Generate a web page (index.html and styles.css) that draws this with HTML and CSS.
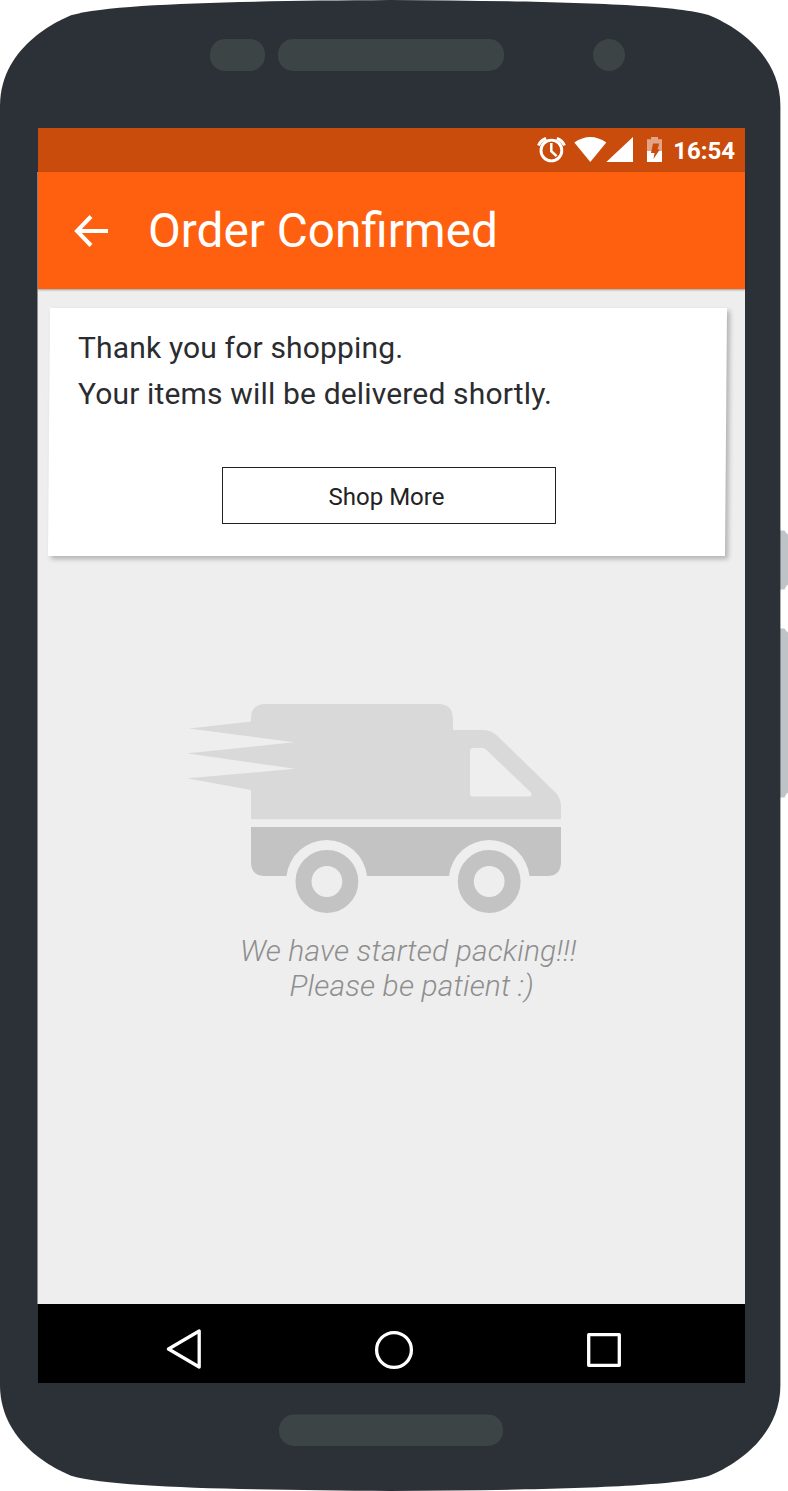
FILE: index.html
```html
<!DOCTYPE html>
<html lang="en">
<head>
<meta charset="utf-8">
<title>Order Confirmed</title>
<link rel="stylesheet" href="styles.css">
</head>
<body>
<div class="device">
  <svg class="shell" viewBox="0 0 788 1491" aria-hidden="true">
    <path class="key" d="M780 530.500h4.500q1.500 3 3.500 4v50q-2 1-3.500 5H780zM780 628.500h4.500q1.500 3 3.500 4v160q-2 1-3.500 5H780z"/>
    <path class="frame" d="M390 0C250 1 112 3 72 15C64 18 0 44 0 106V1385C0 1447 64 1473 72 1476C112 1488 250 1490 390 1491C530 1490 668 1488 708.500 1476C716 1473 780.400 1447 780.400 1385V106C780.400 44 716 18 708.500 15C668 3 530 1 390 0Z"/>
    <rect class="slot" x="210" y="39" width="55" height="32" rx="15"/>
    <rect class="slot" x="278" y="39" width="226" height="32" rx="15"/>
    <circle class="slot" cx="609" cy="55" r="16"/>
    <rect class="slot" x="279" y="1414.500" width="224" height="31.500" rx="15"/>
    <rect class="edge" x="37.500" y="172" width="1" height="1132"/>
  </svg>

  <main class="screen">
    <div class="status">
      <svg class="status-icons" viewBox="537 135 127 30" aria-hidden="true">
        <g fill="none" stroke="#fff">
          <circle cx="551.400" cy="150.500" r="10.400" stroke-width="2.900"/>
          <path stroke-width="2.500" d="M551.300 143v8.200l5.300 5"/>
          <path stroke-width="3" d="M538.500 145.500q2-5 7.600-7M564.400 145.500q-2-5-7.600-7"/>
        </g>
        <path fill="#fff" d="M590.300 162L574.300 142.500q16-11 32 0zM606.300 162H633V137z"/>
        <path fill="#e4a486" d="M647 151v-11.700h4V137h7v2.300h4V151z"/>
        <path fill="#fff" d="M647 151h15v11h-15z"/>
        <path fill="#ca4c0d" d="M653 143.500h6.200l-1.700 6h2.300l-6.300 9.500 1-6H651z"/>
      </svg>
      <span class="time">16:54</span>
    </div>

    <header class="appbar">
      <svg class="back" viewBox="0 0 36 32" aria-hidden="true"><path d="M18 1.500L4 16l14 14.500M4.500 16H35"/></svg>
      <h1 class="title">Order Confirmed</h1>
    </header>

    <section class="content">
      <div class="card">
        <div class="card-body">
          <p class="line thanks">Thank you for shopping.</p>
          <p class="line items">Your items will be delivered shortly.</p>
          <button class="shop" type="button">Shop More</button>
        </div>
      </div>

      <svg class="truck" viewBox="188 703 374 211" aria-hidden="true">
        <path fill="#d9d9d9" fill-rule="evenodd" d="M251 819.300V790L187 778.300L295 768.800L187 753.300L294 742.300L189 728.600L251 721.500V718Q251 704 266 704H438Q453 704 453 719V730H484Q491 730 497.500 736L555 792Q561 798 561 807V819.300ZM473 748Q470 748 470 751V793.500Q470 796.500 473 796.500H529Q532.500 796.500 531 792.500L486 749.500Q484.500 748 482.500 748Z"/>
        <path fill="#c3c3c3" d="M251 827H561V862Q561 876 547 876H529.500A40.500 40.500 0 0 0 449 876H367A40.500 40.500 0 0 0 286.500 876H265Q251 876 251 862Z"/>
        <g fill="none" stroke="#c3c3c3" stroke-width="16">
          <circle cx="326.900" cy="881.500" r="23.400"/>
          <circle cx="489.200" cy="881.500" r="23.400"/>
        </g>
      </svg>
      <p class="note packing">We have started packing!!!</p>
      <p class="note patient">Please be patient :)</p>
    </section>

    <nav class="navbar">
      <svg viewBox="0 0 40 42" aria-hidden="true"><path d="M4.500 20L35.200 2V38Z"/></svg>
      <svg viewBox="0 0 40 42" aria-hidden="true"><circle cx="20" cy="21" r="17.400"/></svg>
      <svg viewBox="0 0 40 42" aria-hidden="true"><rect x="4.700" y="5.700" width="30.600" height="30.600"/></svg>
    </nav>
  </main>
</div>
</body>
</html>
```
FILE: styles.css
```css
* { box-sizing: border-box; margin: 0; padding: 0; }

body { background: #fff; font-family: Roboto, sans-serif; }

.device {
  position: relative;
  width: 788px;
  height: 1491px;
  padding: 128px 43px 108px 38px;
  overflow: hidden;
}

.shell { position: absolute; inset: 0; width: 788px; height: 1491px; }
.key { fill: #bdc3c7; }
.frame { fill: #2c3037; }
.slot { fill: #3d4446; }
.edge { fill: #eee; }

.screen {
  position: relative;
  display: flex;
  flex-direction: column;
  width: 707px;
  height: 1255px;
  background: #eee;
}

.status {
  display: flex;
  align-items: center;
  justify-content: flex-end;
  gap: 10px;
  height: 44px;
  padding-right: 10px;
  background: #ca4c0d;
}
.status-icons { width: 127px; height: 30px; margin-right: -1px; }
.time { padding-top: 2px; color: #fff; font-size: 24px; font-weight: 700; line-height: 44px; }

.appbar {
  display: flex;
  align-items: center;
  height: 117px;
  padding-left: 35px;
  background: #ff6010;
  box-shadow: 0 1px 2px rgba(0, 0, 0, .35);
}
.back { width: 36px; height: 32px; fill: none; stroke: #fff; stroke-width: 4; }
.title { margin-left: 39px; color: #fff; font-size: 47.700px; font-weight: 400; line-height: 60px; white-space: nowrap; }

.content { flex: 1; padding: 19px 19px 0 11px; }

.card {
  width: 677px;
  height: 248px;
  background: #fff;
  box-shadow: 3px 3px 5px rgba(0, 0, 0, .25);
  transform: skewX(-.46deg);
}
.card-body {
  display: flex;
  flex-direction: column;
  height: 248px;
  padding: 17px 29px 0;
  transform: skewX(.46deg);
}
.line { color: #2b2c2f; font-size: 30px; letter-spacing: .16px; line-height: 46px; white-space: nowrap; }
.shop {
  align-self: flex-start;
  width: 334px;
  height: 57px;
  margin: 50px 0 0 144px;
  padding: 3px 5px 0 0;
  border: 1px solid #222;
  background: transparent;
  color: #222;
  font: 400 24px/52px Roboto, sans-serif;
}

.truck { display: block; width: 374px; height: 211px; margin: 147px 0 0 139px; }
.note { color: #8e8e8e; font-size: 30px; font-style: italic; font-weight: 300; letter-spacing: .14px; line-height: 35px; white-space: nowrap; }
.packing { margin: 19px 0 0 191px; }
.patient { margin-left: 240.500px; }

.navbar {
  display: flex;
  gap: 170px;
  height: 79px;
  padding: 25px 0 0 126px;
  background: #000;
}
.navbar svg { width: 40px; height: 42px; fill: none; stroke: #fff; stroke-width: 3.3; stroke-linejoin: round; }
```
